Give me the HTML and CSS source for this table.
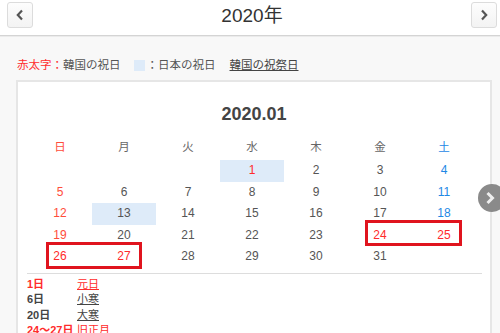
FILE: index.html
```html
<!DOCTYPE html>
<html lang="ja">
<head>
<meta charset="utf-8">
<link rel="stylesheet" href="styles.css">
</head>
<body>
<header class="topbar">
  <button class="nav-btn" aria-label="前年"><svg width="10" height="12" viewBox="0 0 10 12"><path d="M7 1.5 L2.8 6 L7 10.5" fill="none" stroke="#555" stroke-width="2.2"/></svg></button>
  <h1 class="year">2020年</h1>
  <button class="nav-btn" aria-label="翌年"><svg width="10" height="12" viewBox="0 0 10 12"><path d="M3 1.5 L7.2 6 L3 10.5" fill="none" stroke="#555" stroke-width="2.2"/></svg></button>
</header>
<main class="content">
  <p class="legend"><span class="red">赤太字：</span>韓国の祝日<span class="swatch"></span>：日本の祝日<a class="link">韓国の祝祭日</a></p>
  <section class="card">
    <h2 class="month">2020.01</h2>
    <div class="cal">
      <div class="wd sun">日</div><div class="wd">月</div><div class="wd">火</div><div class="wd">水</div><div class="wd">木</div><div class="wd">金</div><div class="wd sat">土</div>
      <div class="d"></div><div class="d"></div><div class="d"></div><div class="d jp hol">1</div><div class="d">2</div><div class="d">3</div><div class="d sat">4</div>
      <div class="d sun">5</div><div class="d">6</div><div class="d">7</div><div class="d">8</div><div class="d">9</div><div class="d">10</div><div class="d sat">11</div>
      <div class="d sun">12</div><div class="d jp">13</div><div class="d">14</div><div class="d">15</div><div class="d">16</div><div class="d">17</div><div class="d sat">18</div>
      <div class="d sun">19</div><div class="d">20</div><div class="d">21</div><div class="d">22</div><div class="d">23</div><div class="d hol">24</div><div class="d hol">25</div>
      <div class="d hol">26</div><div class="d hol">27</div><div class="d">28</div><div class="d">29</div><div class="d">30</div><div class="d">31</div><div class="d"></div>
      <div class="mark mark-a"></div>
      <div class="mark mark-b"></div>
    </div>
    <hr class="divider">
    <dl class="holidays">
      <dt class="red">1日</dt><dd><a class="red">元日</a></dd>
      <dt>6日</dt><dd><a>小寒</a></dd>
      <dt>20日</dt><dd><a>大寒</a></dd>
      <dt class="red">24～27日</dt><dd><a class="red">旧正月</a></dd>
    </dl>
  </section>
  <button class="side-next" aria-label="次"><svg width="12" height="14" viewBox="0 0 12 14"><path d="M3.5 2 L8.5 7 L3.5 12" fill="none" stroke="#eee" stroke-width="3"/></svg></button>
</main>
</body>
</html>
```
FILE: styles.css
```css
html, body {
  margin: 0;
  padding: 0;
  height: 100%;
  overflow: hidden;
}
body {
  font-family: "Liberation Sans", Arial, "Noto Sans CJK JP", sans-serif;
  color: #444;
  background: #f8f8f8;
}
.topbar {
  display: flex;
  align-items: flex-start;
  justify-content: space-between;
  height: 36px;
  padding: 2px 3px 0 7px;
  box-sizing: border-box;
  background: #fff;
  border-bottom: 1px solid #d4d4d4;
  box-shadow: 0 1px 0 #ebebeb;
}
.nav-btn {
  width: 26px;
  height: 26px;
  padding: 0;
  display: flex;
  align-items: center;
  justify-content: center;
  border: 1px solid #dcdcdc;
  border-radius: 3px;
  background: linear-gradient(#fdfdfd, #f3f3f3);
}
.year {
  margin: 0;
  font-size: 19px;
  font-weight: normal;
  line-height: 28px;
  color: #333;
}
.content {
  position: relative;
  padding: 1px 12px 0 16px;
}
.legend {
  margin: 20px 0 0 1px;
  font-size: 11.5px;
  line-height: 16px;
  color: #555;
  display: flex;
  align-items: center;
}
.red { color: #ff2b2b; }
.swatch {
  display: inline-block;
  width: 11px;
  height: 11px;
  background: #deebf9;
  margin: 0 2px 0 13px;
}
.link {
  margin-left: 14px;
  color: #444;
  text-decoration: underline;
}
.card {
  margin-top: 7px;
  width: 452px;
  height: 300px;
  padding: 20px 10px 0;
  background: #fff;
  border: 2px solid #e6e6e6;
}
.month {
  margin: 0;
  text-align: center;
  font-size: 18px;
  line-height: 24px;
  color: #444;
}
.cal {
  position: relative;
  margin-top: 9px;
  display: grid;
  grid-template-columns: repeat(7, 64px);
  grid-template-rows: 25px repeat(5, 21.5px);
  font-size: 12px;
  color: #555;
}
.wd {
  height: 22px;
  text-align: center;
  line-height: 22px;
  font-family: "Noto Sans CJK JP", sans-serif;
  font-size: 11.5px;
  color: #666;
}
.d {
  text-align: center;
  line-height: 21px;
}
.sun { color: #ff4d3a; }
.sat { color: #1e88e5; }
.hol { color: #ff2b2b; }
.jp { background: #deebf9; }
.mark {
  position: absolute;
  border: 3px solid #e0141e;
  box-sizing: border-box;
}
.mark-a { left: 337px; top: 85px; width: 97px; height: 26px; }
.mark-b { left: 18px; top: 107px; width: 96px; height: 27px; }
.divider {
  margin: 5px -2px 0 -1px;
  border: 0;
  border-top: 1px solid #ddd;
}
.holidays {
  margin: 3px 0 0 -1px;
  display: grid;
  grid-template-columns: 50px 1fr;
  font-size: 11px;
  line-height: 15.5px;
}
.holidays dt {
  font-weight: bold;
  color: #444;
}
.holidays dt.red { color: #ff2b2b; }
.holidays dd { margin: 0; }
.holidays a {
  text-decoration: underline;
  color: #444;
}
.holidays a.red { color: #ff2b2b; }
.side-next {
  position: absolute;
  left: 478px;
  top: 148px;
  width: 28px;
  height: 28px;
  padding: 0;
  border: 0;
  border-radius: 50%;
  background: #8a8a8a;
  display: flex;
  align-items: center;
  justify-content: center;
}
.side-next svg { margin-right: 4px; }
```
